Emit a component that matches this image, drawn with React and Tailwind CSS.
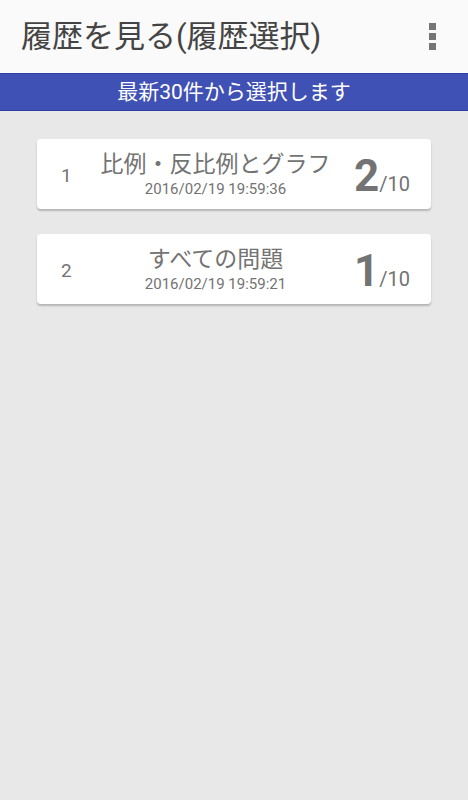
export default function App() {
  const items = [
    { no: 1, title: '比例・反比例とグラフ', date: '2016/02/19 19:59:36', score: 2 },
    { no: 2, title: 'すべての問題', date: '2016/02/19 19:59:21', score: 1 },
  ];

  return (
    <div
      className="w-[468px] h-[800px] bg-[#e8e8e8] flex flex-col"
      style={{ fontFamily: 'Roboto, "Noto Sans CJK JP", sans-serif' }}
    >
      {/* app bar */}
      <div className="h-[73px] bg-[#fafafa] flex items-center pl-[21px] pr-[32px]">
        <h1 className="flex-1 text-[31px] text-[#444444] leading-none">履歴を見る(履歴選択)</h1>
        <div className="flex flex-col gap-[3px]">
          <span className="w-[7px] h-[7px] bg-[#757575]" />
          <span className="w-[7px] h-[7px] bg-[#757575]" />
          <span className="w-[7px] h-[7px] bg-[#757575]" />
        </div>
      </div>

      {/* notice bar */}
      <div className="h-[38px] bg-[#3f51b5] border-y border-[#2c3ea6] flex items-center justify-center text-white text-[21px] leading-none">
        最新30件から選択します
      </div>

      <div className="flex flex-col gap-[25px] px-[37px] pt-[28px]">
        {items.map((it) => (
          <div
            key={it.no}
            className="h-[70px] bg-white rounded-[4px] shadow-[0_2px_2px_rgba(0,0,0,0.22)] flex items-center pl-[24px] pr-[21px] text-[#737373]"
          >
            <span className="w-[16px] text-[19px] mt-[4px]">{it.no}</span>
            <div className="flex-1 flex flex-col items-center">
              <span className="text-[23px] leading-[30px]">{it.title}</span>
              <span className="text-[15px] leading-[18px]">{it.date}</span>
            </div>
            <div className="flex items-baseline mt-[4px]">
              <span className="text-[44px] font-bold leading-none">{it.score}</span>
              <span className="text-[20px] leading-none">/10</span>
            </div>
          </div>
        ))}
      </div>
    </div>
  );
}
